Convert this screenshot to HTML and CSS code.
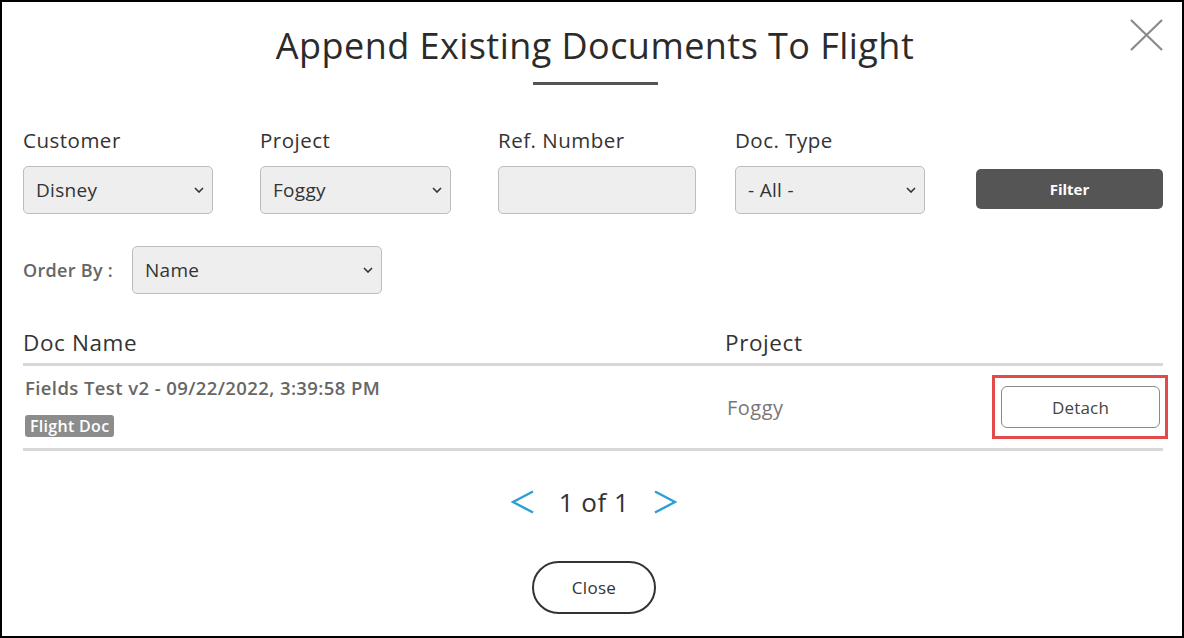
FILE: index.html
```html
<!DOCTYPE html>
<html>
<head>
<meta charset="utf-8">
<link rel="stylesheet" href="styles.css">
</head>
<body>
<div class="modal">
  <button class="close-x" aria-label="Close">
    <svg width="34" height="34" viewBox="0 0 34 34"><path d="M2 2 L33 32 M33 2 L2 32" stroke="#8a8a8a" stroke-width="2.2" fill="none"/></svg>
  </button>
  <h1 class="title">Append Existing Documents To Flight</h1>
  <div class="rule"></div>

  <div class="filters">
    <div class="field">
      <label>Customer</label>
      <select class="sel w190"><option>Disney</option></select>
    </div>
    <div class="field">
      <label>Project</label>
      <select class="sel w191"><option>Foggy</option></select>
    </div>
    <div class="field">
      <label>Ref. Number</label>
      <input class="inp" type="text">
    </div>
    <div class="field">
      <label>Doc. Type</label>
      <select class="sel w190"><option>- All -</option></select>
    </div>
    <div class="field field-btn">
      <button class="filter-btn">Filter</button>
    </div>
  </div>

  <div class="order">
    <span class="order-label">Order By :</span>
    <select class="sel w250"><option>Name</option></select>
  </div>

  <div class="table">
    <div class="thead">
      <div class="c-name">Doc Name</div>
      <div class="c-proj">Project</div>
      <div class="c-act"></div>
    </div>
    <div class="trow">
      <div class="c-name">
        <div class="doc-title">Fields Test v2 - 09/22/2022, 3:39:58 PM</div>
        <div class="badge">Flight Doc</div>
      </div>
      <div class="c-proj proj-val">Foggy</div>
      <div class="c-act">
        <button class="detach">Detach</button>
        <div class="highlight"></div>
      </div>
    </div>
  </div>

  <div class="pager">
    <svg class="arrow" width="24" height="24" viewBox="0 0 24 24"><path d="M22 1.5 L2 12 L22 22.5" stroke="#2a9fd0" stroke-width="2.4" fill="none"/></svg>
    <span class="pages">1 of 1</span>
    <svg class="arrow" width="24" height="24" viewBox="0 0 24 24"><path d="M2 1.5 L22 12 L2 22.5" stroke="#2a9fd0" stroke-width="2.4" fill="none"/></svg>
  </div>

  <div class="footer">
    <button class="close-btn">Close</button>
  </div>
</div>
</body>
</html>
```

FILE: styles.css
```css
* { box-sizing: border-box; }
html, body { margin: 0; padding: 0; background: #fff; }
body { font-family: "Open Sans", "Noto Sans", "Liberation Sans", sans-serif; color: #333; }

.modal {
  position: relative;
  width: 1184px;
  height: 638px;
  border: 2px solid #000;
  padding: 0 19px 0 21px;
  overflow: hidden;
}

.close-x {
  position: absolute;
  top: 16px;
  right: 19px;
  background: none;
  border: 0;
  padding: 0;
  width: 34px;
  height: 34px;
  cursor: pointer;
}

.title {
  margin: 22px 0 0;
  text-align: center;
  font-weight: 400;
  font-size: 36px;
  letter-spacing: 0.45px;
  line-height: 44px;
  color: #2b2b2b;
  padding-left: 4px;
}

.rule {
  width: 125px;
  height: 3px;
  background: #555;
  margin: 14px auto 0;
  position: relative;
  left: 2px;
}

.filters {
  display: grid;
  grid-template-columns: 237px 238px 237px 241px 187px;
  margin-top: 43px;
}
.field { display: flex; flex-direction: column; }
.field label {
  font-size: 20.5px;
  letter-spacing: 0.5px;
  line-height: 24px;
  color: #333;
  margin-bottom: 14px;
}
.field-btn { justify-content: flex-end; padding-bottom: 5px; }

.sel, .inp {
  height: 48px;
  background-color: #eeeeee;
  border: 1px solid #bdbdbd;
  border-radius: 5px;
  font-family: inherit;
  font-size: 19px;
  letter-spacing: 0.3px;
  color: #333;
  padding: 0 30px 0 12px;
}
.sel {
  appearance: none;
  -webkit-appearance: none;
  background-image: url("data:image/svg+xml,%3Csvg xmlns='http://www.w3.org/2000/svg' width='10' height='6' viewBox='0 0 10 6'%3E%3Cpath d='M1 1 L5 5 L9 1' stroke='%23333' stroke-width='1.6' fill='none'/%3E%3C/svg%3E");
  background-repeat: no-repeat;
  background-position: right 8px center;
}
.w190 { width: 190px; }
.w191 { width: 191px; }
.w250 { width: 250px; }
.inp { width: 198px; }

.filter-btn {
  width: 187px;
  height: 40px;
  background: #555;
  color: #fff;
  border: 0;
  border-radius: 5px;
  font-family: inherit;
  font-weight: 700;
  font-size: 15px;
}

.order {
  display: flex;
  align-items: center;
  margin-top: 32px;
}
.order-label { font-size: 18px; letter-spacing: 0.3px; color: #666; font-weight: 600; width: 109px; }

.table { margin-top: 35px; }
.thead, .trow {
  display: grid;
  grid-template-columns: 702px 1fr 180px;
  border-bottom: 3px solid #d8d8d8;
}
.thead {
  font-size: 22.5px;
  letter-spacing: 0.6px;
  line-height: 28px;
  color: #333;
  padding-bottom: 6px;
}
.trow {
  height: 85px;
  align-items: center;
}
.doc-title {
  font-size: 18.5px;
  letter-spacing: 0.4px;
  font-weight: 600;
  color: #666;
  padding-left: 2px;
  line-height: 22px;
}
.badge {
  width: fit-content;
  height: 22px;
  margin-top: 16px;
  margin-left: 2px;
  background: #8c8c8c;
  color: #fff;
  font-size: 16px;
  letter-spacing: 0.3px;
  font-weight: 600;
  line-height: 22px;
  padding: 0 5px;
  border-radius: 3px;
}
.proj-val { font-size: 20px; letter-spacing: 0.5px; color: #777; padding-left: 2px; }
.c-act { position: relative; display: flex; justify-content: flex-end; }
.detach {
  width: 159px;
  height: 42px;
  margin-right: 3px;
  background: #fff;
  border: 1px solid #8a8a8a;
  border-radius: 6px;
  font-family: inherit;
  font-size: 17px;
  letter-spacing: 0.2px;
  color: #444;
}
.highlight {
  position: absolute;
  right: -5px;
  top: -11px;
  width: 176px;
  height: 64px;
  border: 3px solid #e34a4a;
}

.pager {
  display: flex;
  justify-content: center;
  align-items: center;
  gap: 24px;
  margin-top: 34px;
  height: 34px;
  padding-left: 2px;
}
.arrow { display: block; }
.pages { font-size: 26px; letter-spacing: 0.5px; color: #333; }

.footer { display: flex; justify-content: center; margin-top: 42px; }
.close-btn {
  width: 124px;
  height: 53px;
  border: 2px solid #333;
  border-radius: 27px;
  background: #fff;
  font-family: inherit;
  font-size: 17px;
  letter-spacing: 0.3px;
  color: #333;
  margin-left: 2px;
}
```
